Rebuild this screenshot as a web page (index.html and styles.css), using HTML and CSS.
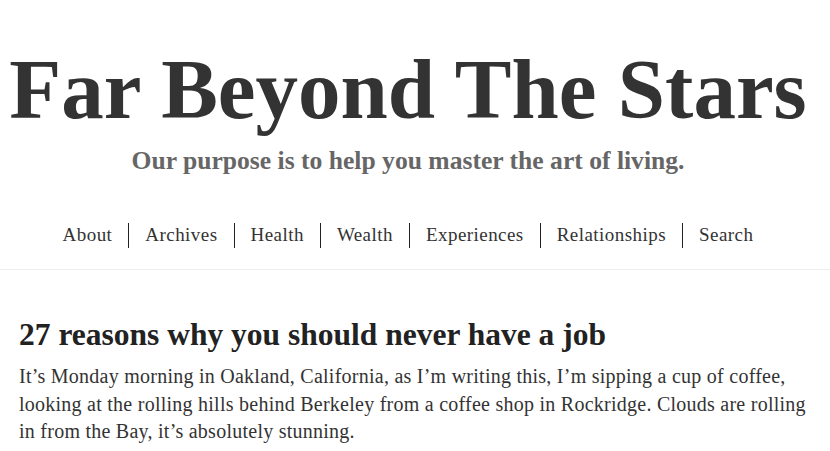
FILE: index.html
```html
<!DOCTYPE html>
<html lang="en">
<head>
    <meta charset="UTF-8">
    <meta name="viewport" content="width=device-width, initial-scale=1.0">
    <title>Far Beyond The Stars</title>
    <link rel="stylesheet" href="styles.css">
</head>
<body>
    <header id="masthead">
        <h1 class="site-title">Far Beyond The Stars</h1>
        <p class="site-description">Our purpose is to help you master the art of living.</p>
        <nav id="site-nav">
            <ul class="menu">
                <li><a href="#">About</a></li>
                <li><a href="#">Archives</a></li>
                <li><a href="#">Health</a></li>
                <li><a href="#">Wealth</a></li>
                <li><a href="#">Experiences</a></li>
                <li><a href="#">Relationships</a></li>
                <li><a href="#">Search</a></li>
            </ul>
        </nav>
    </header>
    <main id="content">
        <article class="post">
            <h2 class="entry-title">27 reasons why you should never have a job</h2>
            <p class="entry-summary">It’s Monday morning in Oakland, California, as I’m writing this, I’m sipping a cup of coffee, looking at the rolling hills behind Berkeley from a coffee shop in Rockridge. Clouds are rolling in from the Bay, it’s absolutely stunning.</p>
        </article>
    </main>
</body>
</html>
```
FILE: styles.css
```css
body {
    margin: 0;
    background: #fff;
    color: #333;
    font-family: "Liberation Serif", serif;
}
#masthead {
    display: flex;
    flex-direction: column;
    align-items: center;
    padding-right: 14px;
    border-bottom: 1px solid #eee;
}
.site-title {
    margin: 34px 0 0;
    font-size: 85px;
    line-height: 110px;
    font-weight: bold;
    color: #333;
    white-space: nowrap;
}
.site-description {
    margin: 0;
    font-size: 25.6px;
    line-height: 34px;
    font-weight: bold;
    color: #666;
}
.menu {
    display: flex;
    list-style: none;
    margin: 45px 0 21px;
    padding: 0;
}
.menu li {
    padding: 0 16px;
    border-left: 1px solid #222;
    line-height: 24px;
}
.menu li:first-child {
    border-left: none;
}
.menu a {
    color: #333;
    text-decoration: none;
    font-size: 19px;
    letter-spacing: 0.45px;
}
#content {
    padding: 45px 19px 0;
}
.entry-title {
    margin: 0 0 8px;
    font-size: 31.5px;
    line-height: 40px;
    color: #222;
}
.entry-summary {
    margin: 0;
    font-size: 20px;
    line-height: 27.5px;
    letter-spacing: 0.25px;
    max-width: 792px;
}
```
